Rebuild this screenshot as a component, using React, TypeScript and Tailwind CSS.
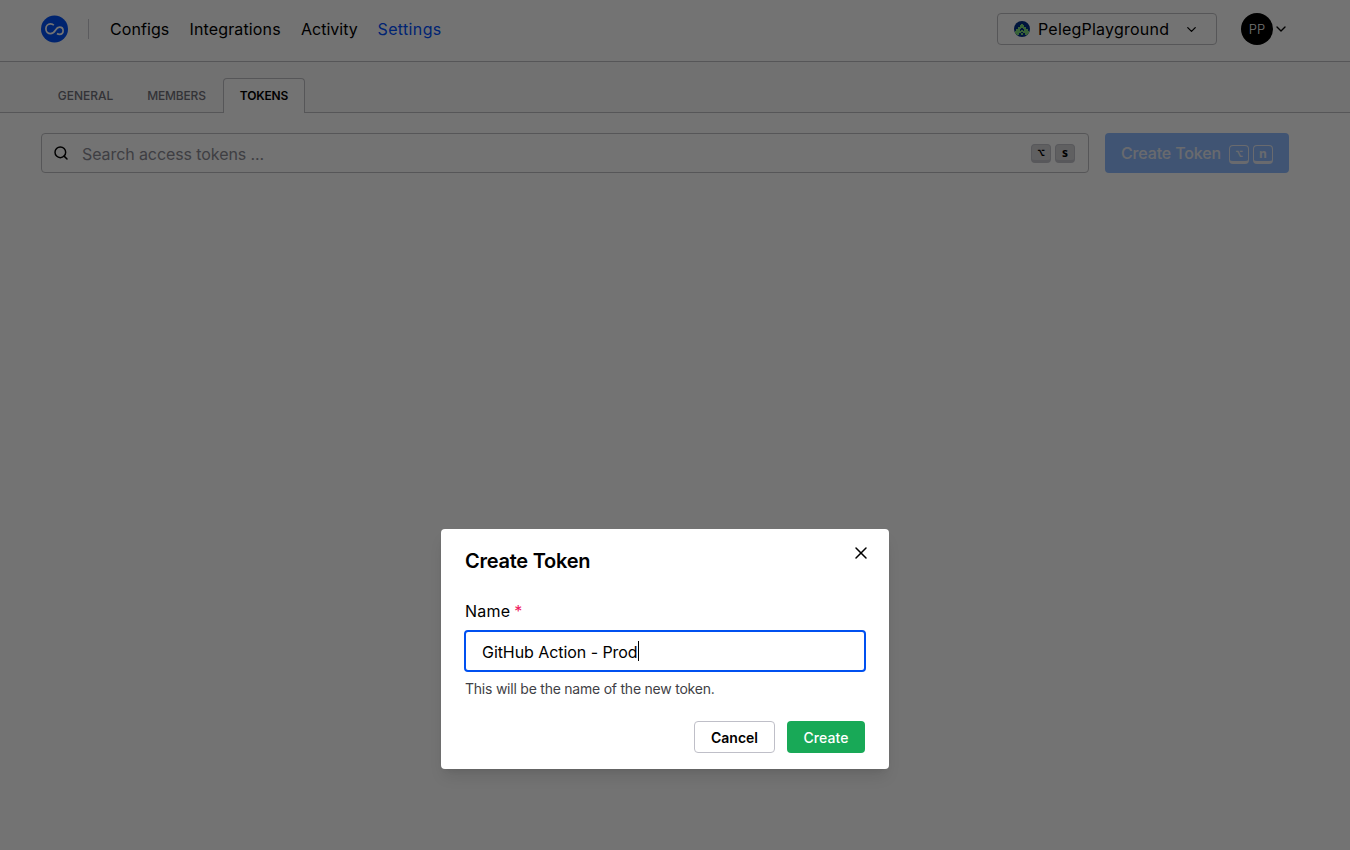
import React from "react";
import { ChevronDown, Search, X } from "lucide-react";

function Logo() {
  return (
    <svg className="h-7 w-7 shrink-0" viewBox="0 0 28 28" fill="none">
      <circle cx="13.5" cy="14" r="13.5" fill="#0050f5" />
      <path
        d="M12.800 10.200C12 9.300 10.900 8.900 9.500 8.900C6.800 8.900 4.900 11.100 4.900 13.800C4.900 16.600 6.900 18.700 9.600 18.700C14.800 18.700 14 12.200 18.500 12.200C20.500 12.200 22.100 13.700 22.100 15.700C22.100 17.700 20.600 19.300 18.600 19.300C17.600 19.300 16.700 19 16 18.500"
        stroke="#fff"
        strokeWidth="1.7"
        strokeLinecap="butt"
      />
    </svg>
  );
}

function TeamAvatar() {
  return (
    <svg className="h-4 w-4 shrink-0" viewBox="0 0 16 16">
      <circle cx="8" cy="8" r="8" fill="#003087" />
      <path
        fill="#7fd97c"
        d="M7 3H9V4H10V6H12V8H14V10H15V12L13 14H11V12H9V10H10V8H9V7H7V8H6V10H7V12H5V14H3L1 12V10H2V8H4V6H6V4H7ZM7 9H9V11H7ZM7 12H9V14H7Z"
      />
    </svg>
  );
}

function Key({ label, light }: { label: string; light?: boolean }) {
  return (
    <kbd
      className={
        light
          ? "flex h-[19px] w-5 items-center justify-center rounded-[4px] border border-b-[3px] border-[#e8ecf4] pt-px font-['Noto_Sans','DejaVu_Sans_Mono',monospace] text-[12px] font-bold leading-none text-[#e8ecf4]"
          : "flex h-[19px] w-5 items-center justify-center rounded-[4px] border border-b-[3px] border-[#c3c4cb] bg-[#d4d4d8] pt-[2px] font-['Noto_Sans','DejaVu_Sans_Mono',monospace] text-[12px] font-bold leading-none text-black"
      }
    >
      {label}
    </kbd>
  );
}

export default function App() {
  return (
    <div className="relative h-[850px] w-[1350px] overflow-hidden bg-white font-['Inter',sans-serif] text-black">
      <header className="flex h-[62px] items-center border-b border-[#bfbfc4] pb-1 pl-[41px] pr-[62px]">
        <Logo />
        <div className="ml-[19px] h-5 w-px bg-[#cbcbd0]" />
        <nav className="ml-[21px] flex text-base leading-6">
          <a className="w-[79.500px] whitespace-nowrap tracking-[0.08px]">Configs</a>
          <a className="w-[111.500px] whitespace-nowrap tracking-[0.14px]">Integrations</a>
          <a className="w-[76.500px] whitespace-nowrap">Activity</a>
          <a className="whitespace-nowrap tracking-[0.36px] text-[#0050ff]">Settings</a>
        </nav>
        <button className="ml-auto flex h-8 w-[220px] items-center rounded-[4px] border border-[#bfbfc4] pl-4 pr-[17px]">
          <TeamAvatar />
          <span className="ml-2 whitespace-nowrap tracking-[0.22px]">PelegPlayground</span>
          <ChevronDown className="ml-auto mt-px h-[15px] w-[15px]" strokeWidth={2} />
        </button>
        <div className="ml-6 flex h-8 w-8 items-center justify-center rounded-full bg-black pt-[2px] text-[13px] font-light text-white">
          PP
        </div>
        <ChevronDown className="-mr-px mt-px h-4 w-4" strokeWidth={2} />
      </header>

      <div className="flex h-[51px] items-end border-b border-[#bfbfc4] bg-[#fafafa] pl-[41px] text-xs font-medium text-[#71717a]">
        <div className="flex h-[34px] w-[89px] items-center justify-center pt-[2px]">GENERAL</div>
        <div className="flex h-[34px] w-[93px] items-center justify-center pt-[2px] tracking-[-0.2px]">MEMBERS</div>
        <div className="-mb-px flex h-[35px] w-[82px] items-center justify-center rounded-t-[4px] border border-b-0 border-[#bfbfc4] bg-white font-semibold tracking-[-0.15px] text-black">
          TOKENS
        </div>
      </div>

      <main className="flex gap-4 pl-[41px] pr-[61px] pt-5">
        <div className="flex h-10 flex-1 items-center rounded-[4px] border border-[#bfbfc4] pl-[11px] pr-[13px]">
          <Search className="h-4 w-4" strokeWidth={2.2} />
          <span className="ml-[13px] pt-px text-base tracking-[-0.09px] text-[#8b8b94]">Search access tokens ...</span>
          <div className="ml-auto flex gap-1">
            <Key label="⌥" />
            <Key label="s" />
          </div>
        </div>
        <button className="flex h-10 w-[184px] items-center rounded-[4px] bg-[#8fbbff] pl-4 pr-4 text-base text-[#e8ecf4]">
          <span className="w-[108px] whitespace-nowrap text-left font-medium tracking-[-0.15px]">Create Token</span>
          <span className="flex gap-1 pt-[2px]">
            <Key label="⌥" light />
            <Key label="n" light />
          </span>
        </button>
      </main>

      <div className="absolute inset-0 bg-black/55" />

      <section
        role="dialog"
        className="absolute left-[441px] top-[529px] flex h-[240px] w-[448px] flex-col rounded-[4px] bg-white px-6 pb-4 pt-4 shadow-lg"
      >
        <div className="flex h-8 justify-between">
          <h2 className="text-xl font-semibold leading-8 tracking-[-0.25px]">Create Token</h2>
          <X className="-mr-[6px] -mt-[2px] h-5 w-5" strokeWidth={1.8} />
        </div>
        <label className="mt-[22px] flex h-6 items-center text-base tracking-[0.2px]">
          Name <span className="ml-1 text-[#f0195e]">*</span>
        </label>
        <div className="-mx-px mt-[7px] flex h-[42px] shrink-0 items-center rounded-[4px] border-2 border-[#0050f0] pl-4 text-base">
          <span className="whitespace-nowrap pt-px tracking-[-0.06px]">GitHub Action - Prod</span>
          <span className="h-5 w-px bg-black" />
        </div>
        <p className="mt-[7px] text-sm leading-5 tracking-[-0.23px] text-[#3f3f46]">
          This will be the name of the new token.
        </p>
        <div className="mt-auto flex justify-end gap-3 text-sm">
          <button className="h-8 w-[81px] rounded-[4px] border border-[#bfbfc8] pt-px font-semibold">Cancel</button>
          <button className="h-8 w-[78px] rounded-[4px] bg-[#18a957] pt-px font-medium tracking-[0.1px] text-white">
            Create
          </button>
        </div>
      </section>
    </div>
  );
}
